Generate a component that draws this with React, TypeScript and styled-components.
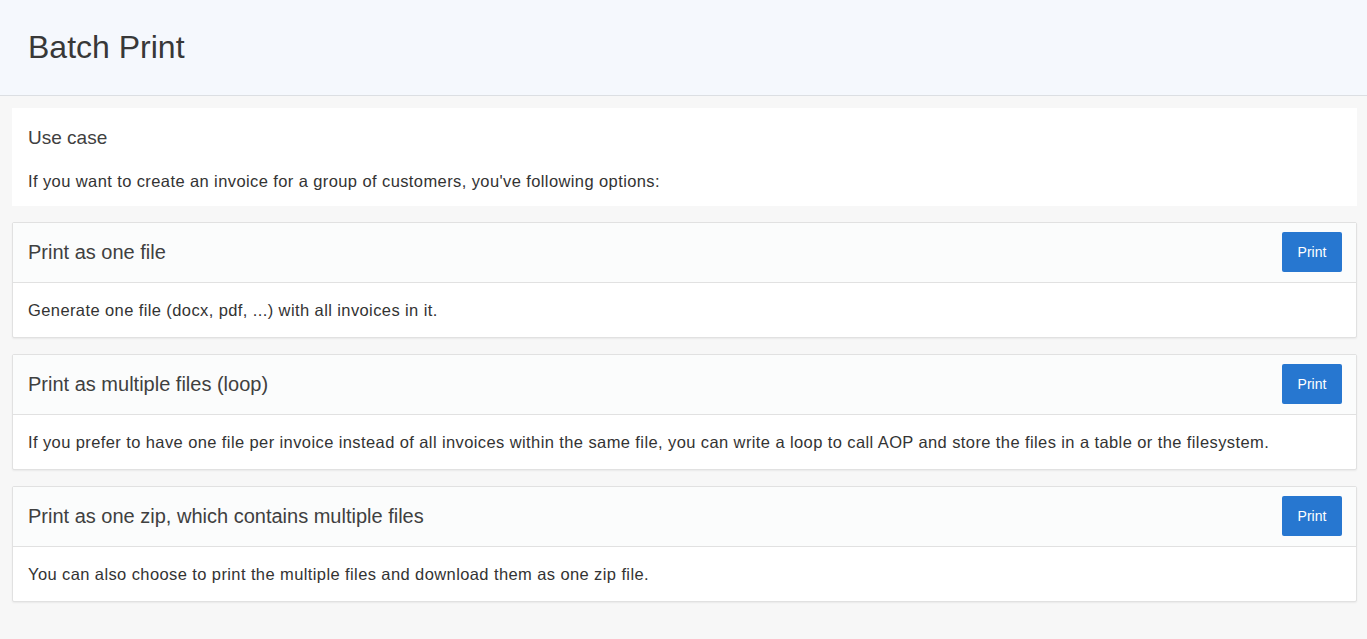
import React from "react";
import styled, { createGlobalStyle } from "styled-components";

const GlobalStyle = createGlobalStyle`
  html, body {
    margin: 0;
    padding: 0;
    background: #f7f7f7;
    font-family: "Liberation Sans", Arial, sans-serif;
    color: #404040;
  }
`;

const options = [
  {
    title: "Print as one file",
    text: "Generate one file (docx, pdf, ...) with all invoices in it.",
  },
  {
    title: "Print as multiple files (loop)",
    text: "If you prefer to have one file per invoice instead of all invoices within the same file, you can write a loop to call AOP and store the files in a table or the filesystem.",
  },
  {
    title: "Print as one zip, which contains multiple files",
    text: "You can also choose to print the multiple files and download them as one zip file.",
  },
];

const App = () => {
  return (
    <>
      <GlobalStyle />
      <Page>
        <Header>
          <Title>Batch Print</Title>
        </Header>
        <Content>
          <Intro>
            <IntroTitle>Use case</IntroTitle>
            <Text>If you want to create an invoice for a group of customers, you've following options:</Text>
          </Intro>
          {options.map((o) => (
            <Card key={o.title}>
              <CardHeader>
                <CardTitle>{o.title}</CardTitle>
                <Button>Print</Button>
              </CardHeader>
              <CardBody>
                <Text>{o.text}</Text>
              </CardBody>
            </Card>
          ))}
        </Content>
      </Page>
    </>
  );
};

export default App;

const Page = styled.div`
  min-height: 639px;
  background: #f7f7f7;
`;

const Header = styled.header`
  height: 95px;
  background: #f5f8fd;
  border-bottom: 1px solid #dcdfe3;
  display: flex;
  align-items: center;
  padding: 0 28px;
  box-sizing: content-box;
`;

const Title = styled.h1`
  margin: 0;
  font-size: 32px;
  font-weight: 400;
  color: #383838;
`;

const Content = styled.main`
  display: flex;
  flex-direction: column;
  gap: 16px;
  padding: 12px 10px 0 12px;
`;

const Intro = styled.section`
  background: #fff;
  padding: 18px 16px 14px 16px;
  display: flex;
  flex-direction: column;
  gap: 20px;
`;

const IntroTitle = styled.h2`
  margin: 0;
  font-size: 19px;
  font-weight: 400;
  line-height: 24px;
  color: #404040;
`;

const Text = styled.p`
  margin: 0;
  font-size: 16.5px;
  letter-spacing: 0.4px;
  line-height: 22px;
  color: #333;
`;

const Card = styled.section`
  background: #fff;
  border: 1px solid #e1e1e1;
  border-radius: 2px;
  box-shadow: 0 1px 2px rgba(0, 0, 0, 0.06);
`;

const CardHeader = styled.div`
  height: 60px;
  box-sizing: border-box;
  display: flex;
  align-items: center;
  justify-content: space-between;
  padding: 0 14px 1px 15px;
  background: #fbfcfc;
  border-bottom: 1px solid #e1e1e1;
`;

const CardTitle = styled.h3`
  margin: 0;
  font-size: 20px;
  font-weight: 400;
  color: #404040;
`;

const Button = styled.button`
  width: 60px;
  height: 40px;
  border: none;
  border-radius: 2px;
  background: #2777d0;
  color: #fff;
  font-family: "Liberation Sans", Arial, sans-serif;
  font-size: 14px;
  cursor: pointer;
`;

const CardBody = styled.div`
  height: 54px;
  display: flex;
  align-items: center;
  padding: 0 15px;
`;
